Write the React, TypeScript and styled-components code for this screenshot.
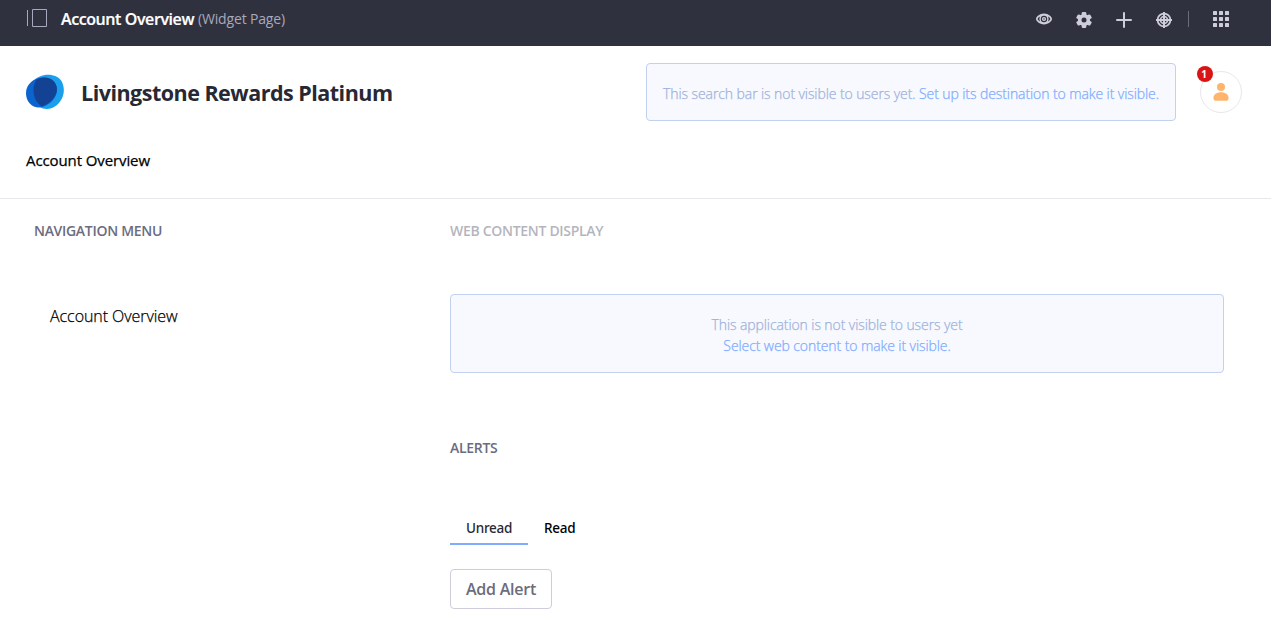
import React from 'react';
import styled, { createGlobalStyle } from 'styled-components';

const GlobalStyle = createGlobalStyle`
  *, *::before, *::after { box-sizing: border-box; }
  body { margin: 0; background: #fff; color: #000; font-family: "Open Sans", "Noto Sans", sans-serif; }
`;

const Page = styled.div`
  display: flex;
  flex-direction: column;
  height: 638px;
  overflow: hidden;
`;

const ControlBar = styled.header`
  display: flex;
  justify-content: space-between;
  height: 46px;
  padding: 0 42px 0 26px;
  background: #30313f;
  color: #cdced9;
`;

const BarStart = styled.div`
  display: flex;
  align-items: flex-start;
  padding-top: 8px;
`;

const BarTitle = styled.h1`
  margin: 0 4px 0 13px;
  color: #fff;
  font-size: 16px;
  font-weight: 600;
  line-height: 22px;
  letter-spacing: -0.41px;
  -webkit-text-stroke: 0.2px currentColor;
`;

const BarNote = styled.span`
  color: #a7a9bc;
  font-size: 14px;
  line-height: 22px;
  letter-spacing: -0.17px;
`;

const BarActions = styled.div`
  display: flex;
  align-items: flex-start;
  gap: 24px;
  padding-top: 11px;
`;

const ActionIcon = styled.svg<{ $drop?: number }>`
  display: block;
  width: 16px;
  height: 16px;
  margin-top: ${p => p.$drop ?? 0}px;
  fill: #cdced9;
`;

const Divider = styled.i`
  width: 1px;
  height: 16px;
  margin: 0 0 0 -8px;
  background: #6b6c7e;
`;

const SiteHeader = styled.div`
  height: 153px;
  padding: 17px 29px 0 26px;
  border-bottom: 1px solid #e7e7ed;
`;

const Branding = styled.div`
  display: flex;
  align-items: center;
  height: 58px;
`;

const SiteName = styled.h2`
  flex: 1;
  margin: 1px 0 0 17px;
  color: #272833;
  font-size: 21.5px;
  font-weight: 700;
  line-height: 30px;
  letter-spacing: -0.51px;
  white-space: nowrap;
`;

const Notice = styled.div<{ $h: number; $w?: number }>`
  display: flex;
  flex-direction: column;
  align-items: center;
  justify-content: center;
  width: ${p => (p.$w ? `${p.$w}px` : 'auto')};
  height: ${p => p.$h}px;
  padding-top: 2px;
  border: 1px solid #c1d1ef;
  border-radius: 4px;
  background: #f7f9fe;
  color: #9fb2dc;
  font-size: 14px;
  font-weight: 300;
  line-height: 21px;
  letter-spacing: -0.09px;
  -webkit-text-stroke: 0.25px currentColor;
  white-space: nowrap;
`;

const NoticeLink = styled.a`
  color: #80acff;
`;

const Avatar = styled.div`
  position: relative;
  display: flex;
  align-items: center;
  justify-content: center;
  width: 42px;
  height: 42px;
  margin-left: 24px;
  border: 1px solid #e7e7ed;
  border-radius: 50%;
`;

const Badge = styled.span`
  position: absolute;
  top: -6px;
  left: -4px;
  width: 16px;
  height: 16px;
  padding-right: 2px;
  border-radius: 50%;
  background: #da1414;
  color: #fff;
  font-size: 10px;
  font-weight: 700;
  line-height: 17px;
  text-align: center;
`;

const SiteNav = styled.nav`
  margin-top: 28px;
  font-size: 15px;
  line-height: 22px;
  letter-spacing: -0.1px;
  -webkit-text-stroke: 0.25px currentColor;
`;

const Content = styled.main`
  display: flex;
  padding: 0 47px 0 34px;
`;

const Side = styled.aside`
  width: 416px;
`;

const Main = styled.section`
  flex: 1;
`;

const PortletTitle = styled.h3<{ $muted?: boolean }>`
  margin: 21px 0 0;
  color: #6b6c7e;
  opacity: ${p => (p.$muted ? 0.5 : 1)};
  font-size: 14px;
  font-weight: 600;
  line-height: 22px;
  letter-spacing: -0.3px;
`;

const MenuItem = styled.div`
  margin: 63px 0 0 16px;
  font-size: 16px;
  font-weight: 300;
  line-height: 22px;
  letter-spacing: -0.06px;
  -webkit-text-stroke: 0.25px currentColor;
`;

const WebContent = styled.div`
  margin-top: 52px;
`;

const Alerts = styled.div`
  margin-top: 64px;
`;

const Tabs = styled.div`
  display: flex;
  margin-top: 54px;
`;

const Tab = styled.div<{ $active?: boolean }>`
  height: 32px;
  padding: 4px 16px 0;
  border-bottom: 2px solid ${p => (p.$active ? '#80acff' : 'transparent')};
  color: ${p => (p.$active ? '#272833' : '#000')};
  font: 500 13.5px/22px "Noto Sans", sans-serif;
  letter-spacing: -0.27px;
`;

const AddButton = styled.button`
  width: 102px;
  height: 40px;
  margin-top: 24px;
  padding: 0;
  border: 1px solid #cdced9;
  border-radius: 4px;
  background: #fff;
  color: #6b6c7e;
  font: 600 16px/24px "Open Sans", sans-serif;
  letter-spacing: -0.24px;
`;

const PanelIcon = () => (
  <svg width="22" height="20" viewBox="0 0 22 20" fill="none" stroke="#a7a9bc">
    <path d="M1.5 2v16M6.5 1.5h14v17h-14z" />
  </svg>
);

const Logo = () => (
  <svg width="38" height="36" viewBox="0 0 38 36">
    <path d="M8 7C13-1 31-2 36 8c5 11-1 22-10 26-8 3-14-1-18-7C5 21 4 14 8 7z" fill="#1b9fec" />
    <path d="M0 19C0 10 8 3.500 17 3.500c8 0 14 5 14 12 0 8-6 14-13 17C9 36 0 30 0 19z" fill="#0b63ce" />
    <path d="M10 6C15 2.500 24 2.500 28 7.500c5 6 3 13-1.500 18-3 3.500-7 5.500-11 7C7 26 5.500 15 10 6z" fill="#134194" />
  </svg>
);

const GEAR_ANGLES = [0, 60, 120];
const GRID_STEPS = [0, 6, 12];

export default function App() {
  return (
    <Page>
      <GlobalStyle />
      <ControlBar>
        <BarStart>
          <PanelIcon />
          <BarTitle>Account Overview</BarTitle>
          <BarNote>(Widget Page)</BarNote>
        </BarStart>
        <BarActions>
          <ActionIcon viewBox="0 0 16 16">
            <path fillRule="evenodd" d="M8 2.600c4.500 0 8 3.400 8 5.400s-3.500 5.400-8 5.400S0 10 0 8s3.500-5.400 8-5.400zM4 5.600C2.400 6.400 1.700 7.400 1.700 8S2.400 9.600 4 10.400a5 5 0 0 1 0-4.800zm8 0a5 5 0 0 1 0 4.800c1.600-.8 2.300-1.800 2.300-2.400S13.600 6.400 12 5.600zM8 4.800a3.200 3.200 0 1 0 0 6.400 3.200 3.200 0 0 0 0-6.400z" />
            <circle cx="8" cy="8" r="2.100" />
            <circle cx="8" cy="8" r="0.700" fill="#30313f" />
          </ActionIcon>
          <ActionIcon viewBox="0 0 16 16" $drop={1}>
            {GEAR_ANGLES.map(a => (
              <rect key={a} x="5.700" y="0" width="4.600" height="16" rx="1.200" transform={`rotate(${a} 8 8)`} />
            ))}
            <circle cx="8" cy="8" r="6.100" />
            <circle cx="8" cy="8" r="2.500" fill="#30313f" />
          </ActionIcon>
          <ActionIcon viewBox="0 0 16 16" $drop={1}>
            <path d="M7 1a1 1 0 0 1 2 0v6h6a1 1 0 0 1 0 2H9v6a1 1 0 0 1-2 0V9H1a1 1 0 0 1 0-2h6z" />
          </ActionIcon>
          <ActionIcon viewBox="0 0 16 16" $drop={1}>
            <g fill="none" stroke="#cdced9">
              <circle cx="8" cy="8" r="6.400" strokeWidth="1.800" />
              <circle cx="8" cy="8" r="3.500" strokeWidth="1.700" />
              <path d="M8 0v16M0 8h16" strokeWidth="2" />
            </g>
          </ActionIcon>
          <Divider />
          <ActionIcon viewBox="0 0 16 16">
            {GRID_STEPS.map(y => GRID_STEPS.map(x => (
              <rect key={`${x}-${y}`} x={x} y={y} width="4" height="4" rx="0.600" />
            )))}
          </ActionIcon>
        </BarActions>
      </ControlBar>

      <SiteHeader>
        <Branding>
          <Logo />
          <SiteName>Livingstone Rewards Platinum</SiteName>
          <Notice $h={58} $w={530}>
            <span>This search bar is not visible to users yet. <NoticeLink>Set up its destination to make it visible.</NoticeLink></span>
          </Notice>
          <Avatar>
            <svg width="16" height="18" viewBox="0 0 16 18" fill="#ffb46e">
              <circle cx="8" cy="4" r="4" />
              <path d="M8 9.200c4.600 0 7.600 2.400 7.600 5.700 0 2-1.200 2.900-2.800 2.900H3.200C1.600 17.800.4 16.900.4 14.900c0-3.300 3-5.700 7.600-5.700z" />
            </svg>
            <Badge>1</Badge>
          </Avatar>
        </Branding>
        <SiteNav>Account Overview</SiteNav>
      </SiteHeader>

      <Content>
        <Side>
          <PortletTitle>NAVIGATION MENU</PortletTitle>
          <MenuItem>Account Overview</MenuItem>
        </Side>
        <Main>
          <PortletTitle $muted>WEB CONTENT DISPLAY</PortletTitle>
          <WebContent>
            <Notice $h={79}>
              <span>This application is not visible to users yet</span>
              <NoticeLink>Select web content to make it visible.</NoticeLink>
            </Notice>
          </WebContent>
          <Alerts>
            <PortletTitle>ALERTS</PortletTitle>
            <Tabs>
              <Tab $active>Unread</Tab>
              <Tab>Read</Tab>
            </Tabs>
            <AddButton>Add Alert</AddButton>
          </Alerts>
        </Main>
      </Content>
    </Page>
  );
}
